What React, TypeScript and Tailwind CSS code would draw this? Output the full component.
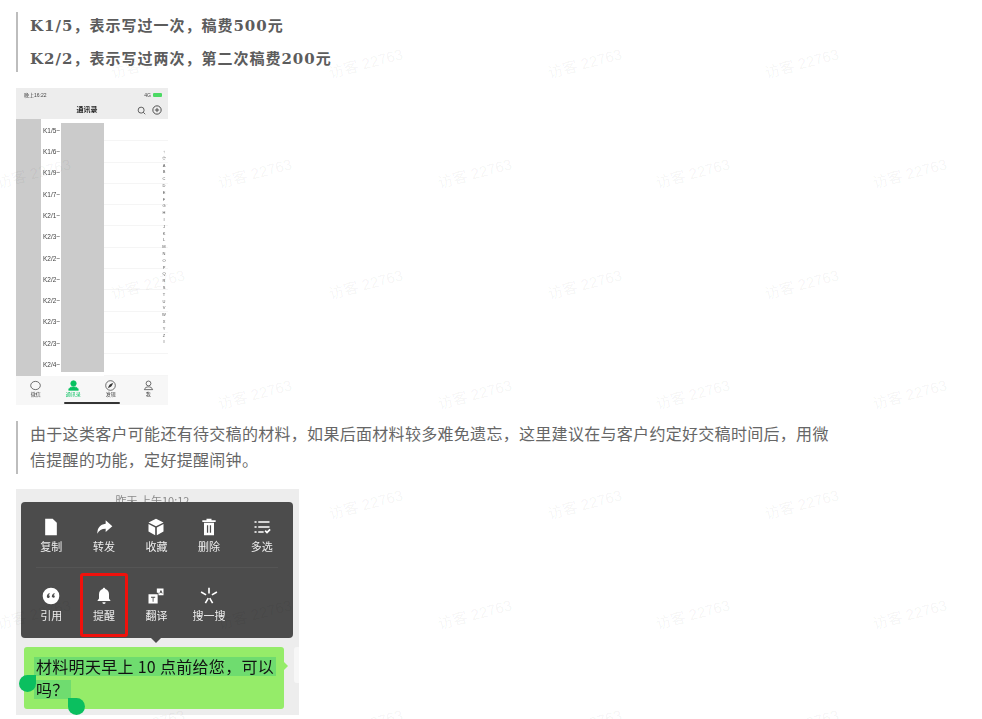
const watermarkRows = [
  { y: 64, xs: [148, 366, 585, 802] },
  { y: 174, xs: [34, 255, 475, 693, 910] },
  { y: 285, xs: [148, 366, 585, 802] },
  { y: 395, xs: [255, 475, 693, 910] },
  { y: 505, xs: [366, 585, 802] },
  { y: 615, xs: [34, 255, 475, 693, 910] },
  { y: 725, xs: [148, 366, 585, 802] },
];

const contacts = ['K1/5~', 'K1/6~', 'K1/9~', 'K1/7~', 'K2/1~', 'K2/3~', 'K2/2~', 'K2/2~', 'K2/2~', 'K2/3~', 'K2/3~', 'K2/4~'];
const letters = ['↑', '☆', 'A', 'B', 'C', 'D', 'E', 'F', 'G', 'H', 'I', 'J', 'K', 'L', 'M', 'N', 'O', 'P', 'Q', 'R', 'S', 'T', 'U', 'V', 'W', 'X', 'Y', 'Z', '#'];

function Watermarks() {
  return (
    <div className="absolute inset-0 overflow-hidden pointer-events-none z-10">
      {watermarkRows.flatMap((row) =>
        row.xs.map((x) => (
          <span
            key={`${row.y}-${x}`}
            className="absolute -translate-x-1/2 -translate-y-1/2 -rotate-[15deg] whitespace-nowrap text-[15px] text-black/5"
            style={{ left: x, top: row.y }}
          >
            访客 22763
          </span>
        ))
      )}
    </div>
  );
}

function PhoneTab({ label, active, children }: { label: string; active?: boolean; children: React.ReactNode }) {
  return (
    <div className={`flex flex-col items-center w-[38px] ${active ? 'text-[#07c160]' : 'text-[#333]'}`}>
      <svg viewBox="0 0 16 16" className="size-[11px]" fill="none" stroke="currentColor" strokeWidth="1">
        {children}
      </svg>
      <span className="text-[5px] leading-[6px]">{label}</span>
    </div>
  );
}

function PhoneShot() {
  return (
    <div className="relative w-[152px] h-[317px] bg-white flex flex-col overflow-hidden blur-[0.5px]">
      {/* status + title bar */}
      <div className="h-[31px] bg-[#ededed] pl-2 pr-[6px] pt-1 flex flex-col shrink-0">
        <div className="flex justify-between text-[5px] leading-[6px] text-[#444]">
          <span>晚上16:22</span>
          <span className="flex items-center gap-0.5">
            4G
            <span className="w-[9px] h-[4px] bg-[#4cd964] rounded-[1px]" />
          </span>
        </div>
        <div className="flex items-center mt-[7px]">
          <span className="flex-1 pl-[13px] text-center text-[7px] font-bold text-[#222]">通讯录</span>
          <svg viewBox="0 0 24 24" className="size-[9px] mr-[6px]" fill="none" stroke="#333" strokeWidth="2">
            <circle cx="11" cy="11" r="8" />
            <path d="M17 17l5 5" />
          </svg>
          <svg viewBox="0 0 24 24" className="size-[10px]" fill="none" stroke="#333" strokeWidth="2">
            <circle cx="12" cy="12" r="10" />
            <path d="M12 7v10M7 12h10" />
          </svg>
        </div>
      </div>

      {/* contact list */}
      <div className="flex flex-1 relative">
        <div className="w-[25px] bg-[#cbcbcb]" />
        <div className="w-[20px] pl-[2px] pt-[1px] flex flex-col">
          {contacts.map((c, i) => (
            <span key={i} className="h-[21.3px] flex items-center text-[6.5px] text-[#444] whitespace-nowrap">
              {c}
            </span>
          ))}
        </div>
        <div className="w-[43px] bg-[#cbcbcb] my-[4px] relative z-[1]" />
        <div className="flex-1 flex flex-col pt-[1px]">
          {contacts.map((_, i) => (
            <div key={i} className="h-[21.3px] border-b border-[#f5f5f5]" />
          ))}
        </div>
        <div className="absolute right-[2px] top-[30px] flex flex-col items-center">
          {letters.map((l) => (
            <span key={l} className="h-[6.8px] text-[4px] leading-[6.8px] text-[#555]">
              {l}
            </span>
          ))}
        </div>
      </div>

      {/* tab bar */}
      <div className="relative h-[29px] bg-[#f7f7f7] flex justify-around pt-[4px] px-[1px] shrink-0">
        <PhoneTab label="微信">
          <ellipse cx="8" cy="8" rx="7" ry="6" />
        </PhoneTab>
        <PhoneTab label="通讯录" active>
          <circle cx="8" cy="5" r="4" fill="currentColor" />
          <path d="M1 15c0-4 3-5 7-5s7 1 7 5z" fill="currentColor" />
        </PhoneTab>
        <PhoneTab label="发现">
          <circle cx="8" cy="8" r="7" />
          <path d="M11 5L9 9 5 11l2-4z" fill="currentColor" />
        </PhoneTab>
        <PhoneTab label="我">
          <circle cx="8" cy="5" r="3.5" />
          <path d="M2 14c1-3 3-4 6-4s5 1 6 4z" />
        </PhoneTab>
        <div className="absolute bottom-[1px] left-[48px] w-[56px] h-[2px] bg-[#333] rounded-full" />
      </div>
    </div>
  );
}

function MenuItem({ label, children }: { label: string; children: React.ReactNode }) {
  return (
    <div className="w-[52.6px] flex flex-col items-center">
      <svg viewBox="0 0 24 24" className="size-[20px] text-white" fill="currentColor">
        {children}
      </svg>
      <span className="mt-px text-[11px] leading-[16px] text-white/90 whitespace-nowrap">{label}</span>
    </div>
  );
}

function ChatShot() {
  return (
    <div className="relative w-[283px] h-[226px] bg-[#ededed] overflow-hidden blur-[0.3px] font-['Noto_Sans_CJK_SC',sans-serif]">
      <div className="h-[13px] text-center text-[11px] leading-[22px] text-[#8a8a8a] pr-[10px]">昨天 上午10:12</div>

      {/* long-press menu */}
      <div className="relative mx-[5px] w-[272px] h-[136px] rounded-[4px] bg-[#4c4c4c] px-[4px] pt-[15px]">
        <div className="flex">
          <MenuItem label="复制">
            <path d="M5 2h9l5 5v15H5z" />
          </MenuItem>
          <MenuItem label="转发">
            <path d="M14 4l8 7-8 7v-4c-5 0-8 2-10 6 0-7 3-11 10-12z" />
          </MenuItem>
          <MenuItem label="收藏">
            <path d="M12 2l9 4.500-9 4.500-9-4.500zM3 8.500l8 4V22l-8-4.500zM21 8.500l-8 4V22l8-4.500z" />
          </MenuItem>
          <MenuItem label="删除">
            <path d="M4 4h16v2H4zM9 2h6v2H9zM6 7h12v15H6z" />
            <path d="M9.500 10h1.500v9H9.500zM13 10h1.500v9H13z" fill="#4c4c4c" />
          </MenuItem>
          <MenuItem label="多选">
            <path d="M3 5h2.500v2H3zM7.500 5H21v2H7.500zM3 11h2.500v2H3zM7.500 11H21v2H7.500zM3 17h2.500v2H3zM7.500 17h6.500v2H7.500zM15 17l1.500-1.500 1.500 1.500 3-3 1.500 1.500-4.500 4.500z" />
          </MenuItem>
        </div>
        <div className="mt-[13px] mb-[18px] h-px bg-white/5 mx-[11px]" />
        <div className="flex">
          <MenuItem label="引用">
            <path d="M12 2a10 10 0 100 20 10 10 0 000-20z" />
            <path d="M7 13c0-2 1-3.500 3-4.500l.5 1c-1 .5-1.500 1-1.500 1.500 1 0 1.500.700 1.500 1.500S9.800 14.500 9 14.500 7 14 7 13zM13 13c0-2 1-3.500 3-4.500l.5 1c-1 .5-1.500 1-1.500 1.500 1 0 1.500.700 1.500 1.500s-.700 1.500-1.500 1.500S13 14 13 13z" fill="#4c4c4c" />
          </MenuItem>
          <MenuItem label="提醒">
            <path d="M12 2c1 0 1.500.700 1.500 1.500C16.500 4.300 18 7 18 10v5l2 3H4l2-3v-5c0-3 1.500-5.700 4.500-6.500C10.500 2.700 11 2 12 2zM10 19.500h4a2 2 0 01-4 0z" />
          </MenuItem>
          <MenuItem label="翻译">
            <path d="M3 10h11v11H3zM13 3h8v8h-6V8h-2z" />
            <path d="M6 13h5v1H6zM8 14h1v5H8zM16 9l1.500-4h.8L20 9h-1l-.3-1h-1.600l-.3 1z" fill="#4c4c4c" />
          </MenuItem>
          <MenuItem label="搜一搜">
            <path d="M11 2h2v7h-2zM2 8l1-1.700 6 3.500-1 1.700zM22 8l-1-1.700-6 3.500 1 1.700zM8.500 21l-1.700-1 3.500-6 1.700 1zM15.500 21l1.700-1-3.500-6-1.700 1z" />
          </MenuItem>
        </div>
        <div className="absolute left-[130px] -bottom-[5px] w-0 h-0 border-x-[5px] border-x-transparent border-t-[5px] border-t-[#4c4c4c]" />
        {/* red highlight on 提醒 */}
        <div className="absolute left-[59px] top-[71px] w-[48px] h-[64px] border-[3px] border-[#f0110c] rounded-[3px]" />
      </div>

      {/* message bubble */}
      <div className="relative ml-[8px] mt-[9px] w-[260px] h-[62px] rounded-[3px] bg-[#95ec69] pl-[10px] pt-[10px] text-[16px] leading-[19px] tracking-[0.3px] text-[#111]">
        <span className="block w-fit px-[2px] bg-[#6fdc6f]">材料明天早上 10 点前给您，可以</span>
        <span className="block w-fit mt-[4px] px-[2px] bg-[#6fdc6f]">吗？</span>
        <div className="absolute -right-[4px] top-[15px] size-0 border-y-[4px] border-y-transparent border-l-[4px] border-l-[#95ec69]" />
        <div className="absolute -left-[5px] top-[28px] size-[17px] rounded-full rounded-tr-none bg-[#0bbf5f]" />
        <div className="absolute left-[44px] top-[51px] size-[17px] rounded-full rounded-tl-none bg-[#0bbf5f]" />
      </div>
      <div className="absolute right-0 top-[158px] w-[5px] h-[36px] bg-[#f7f7f7] rounded-l-[3px]" />
    </div>
  );
}

export default function App() {
  return (
    <div className="relative h-[719px] overflow-hidden bg-white px-4 pt-3 font-['Liberation_Sans','Noto_Sans_CJK_SC',sans-serif]">
      <Watermarks />

      <blockquote className="border-l-2 border-[#bdbdbd] pl-3 pt-px flex flex-col gap-[7px] text-[15px] font-bold leading-[26px] tracking-[1px] text-[#5c5c5c] font-['DejaVu_Serif','Noto_Sans_CJK_SC',serif]">
        <p>K1/5，表示写过一次，稿费500元</p>
        <p>K2/2，表示写过两次，第二次稿费200元</p>
      </blockquote>

      <div className="mt-4">
        <PhoneShot />
      </div>

      <blockquote className="mt-4 border-l-2 border-[#bdbdbd] pl-3 pt-px max-w-[820px] text-[16px] leading-[26px] tracking-[0.3px] text-[#666]">
        由于这类客户可能还有待交稿的材料，如果后面材料较多难免遗忘，这里建议在与客户约定好交稿时间后，用微信提醒的功能，定好提醒闹钟。
      </blockquote>

      <div className="mt-[15px]">
        <ChatShot />
      </div>
    </div>
  );
}
